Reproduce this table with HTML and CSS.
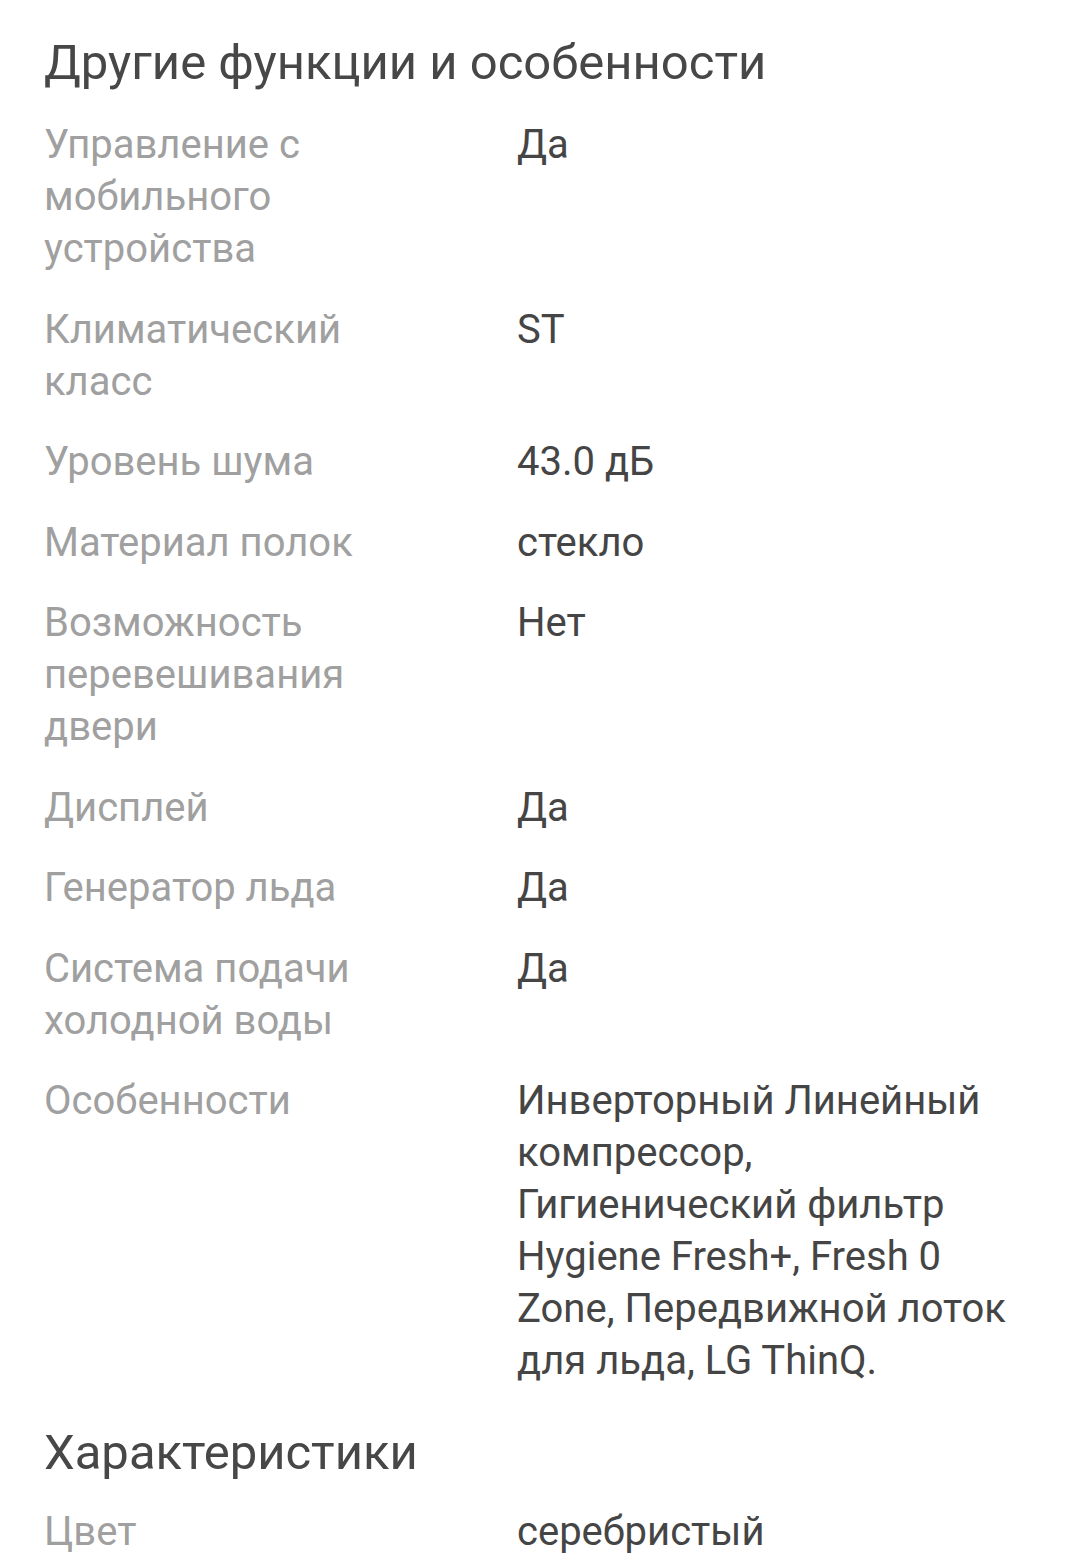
FILE: index.html
```html
<!DOCTYPE html>
<html lang="ru">
<head>
  <meta charset="UTF-8" />
  <meta name="viewport" content="width=device-width, initial-scale=1.0"/>
  <title>Характеристики</title>
  <link rel="stylesheet" href="styles.css">
</head>
<body>
  <section class="spec-group">
    <h2>Другие функции и особенности</h2>
    <div class="spec-list">
      <div class="spec-label">Управление с мобильного устройства</div>
      <div class="spec-value">Да</div>

      <div class="spec-label">Климатический класс</div>
      <div class="spec-value">ST</div>

      <div class="spec-label">Уровень шума</div>
      <div class="spec-value">43.0 дБ</div>

      <div class="spec-label">Материал полок</div>
      <div class="spec-value">стекло</div>

      <div class="spec-label">Возможность перевешивания двери</div>
      <div class="spec-value">Нет</div>

      <div class="spec-label">Дисплей</div>
      <div class="spec-value">Да</div>

      <div class="spec-label">Генератор льда</div>
      <div class="spec-value">Да</div>

      <div class="spec-label">Система подачи холодной воды</div>
      <div class="spec-value">Да</div>

      <div class="spec-label">Особенности</div>
      <div class="spec-value">Инверторный Линейный компрессор, Гигиенический фильтр Hygiene Fresh+, Fresh 0 Zone, Передвижной лоток для льда, LG ThinQ.</div>
    </div>
  </section>

  <section class="spec-group">
    <h2>Характеристики</h2>
    <div class="spec-list">
      <div class="spec-label">Цвет</div>
      <div class="spec-value">серебристый</div>
    </div>
  </section>
</body>
</html>
```

FILE: styles.css
```css
body {
  margin: 0;
  padding: 0 44px;
  font-family: Roboto, 'Noto Sans', sans-serif;
  background-color: #fff;
  color: #444;
}

.spec-group h2 {
  margin: 0;
  font-size: 49px;
  font-weight: 400;
  line-height: 56px;
  color: #474747;
}

.spec-group:first-child h2 {
  padding-top: 35px;
}

.spec-group + .spec-group h2 {
  padding-top: 38px;
}

.spec-list {
  display: grid;
  grid-template-columns: 473px 1fr;
  row-gap: 28.5px;
  padding-top: 28px;
  font-size: 40px;
  line-height: 52px;
}

.spec-group + .spec-group .spec-list {
  padding-top: 25px;
}

.spec-label {
  color: #a0a0a0;
  padding-right: 90px;
}

.spec-value {
  color: #454545;
}
```
